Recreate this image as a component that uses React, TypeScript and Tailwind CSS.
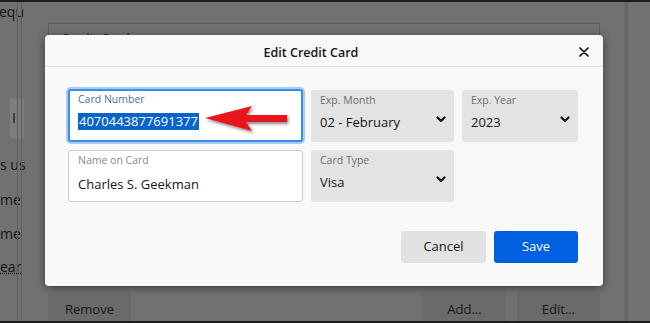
import * as React from 'react';

const font = { fontFamily: '"Open Sans", "Noto Sans", sans-serif' };

const Chevron = () => (
  <svg width="10" height="7" viewBox="0 0 10 7" className="shrink-0">
    <path d="M1.5 1.5 L5 5 L8.5 1.5" fill="none" stroke="#111" strokeWidth="2.2" strokeLinecap="round" strokeLinejoin="round" />
  </svg>
);

// the red pointer drawn over the card number
const RedArrow = () => (
  <svg width="90" height="32" viewBox="0 0 90 32" className="absolute left-[133px] top-[12px]">
    <defs>
      <filter id="sh" x="-10%" y="-20%" width="130%" height="160%">
        <feDropShadow dx="1.5" dy="2" stdDeviation="1.4" floodColor="#000" floodOpacity="0.45" />
      </filter>
    </defs>
    <polygon
      points="2,15 49,3 43,12 84,12 84,19 43,19 49,28"
      fill="#e8141c"
      filter="url(#sh)"
    />
  </svg>
);

interface SelectProps {
  label: string;
  value: string;
}

const SelectField = ({ label, value }: SelectProps) => (
  <div className="h-[52px] rounded-[3px] bg-[#e3e3e3] pl-[9px] pr-[8px] pt-[3px] flex flex-col">
    <span className="text-[10.5px] leading-[15px] text-[#6d6d6d]">{label}</span>
    <div className="flex items-center justify-between mt-[4px]">
      <span className="text-[13px] leading-[20px] text-[#151515]">{value}</span>
      <div className="-mt-[6px]"><Chevron /></div>
    </div>
  </div>
);

const App = () => {
  return (
    <div className="w-[650px] h-[323px] relative overflow-hidden bg-[#717171] border-y-2 border-[#1c1c1c]" style={font}>
      {/* page behind the dialog */}
      <div className="flex h-full">
        <div className="w-[17px] flex flex-col items-start text-[14px] leading-[20px] text-[#111]">
          <span className="whitespace-nowrap -ml-[1px]">equ</span>
          <div className="mt-[76px] h-[40px] w-[14px] bg-[#7d7d7d] ml-[10px] flex items-center text-[14px] pl-[2px]">I</div>
          <span className="whitespace-nowrap mt-[17px]">s us</span>
          <span className="whitespace-nowrap mt-[15px]">me</span>
          <span className="whitespace-nowrap mt-[14px]">me</span>
          <span className="whitespace-nowrap mt-[13px] underline decoration-dotted">ear</span>
        </div>
        <div className="w-[5px] border-x border-[#5f5f5f]" />
        <div className="flex-1 pl-[26px] pr-[25px] pt-[21px] flex flex-col">
          <div className="h-[30px] border border-[#5c5c5c] border-b-0 pl-[12px] pt-[5px] text-[13px] text-[#1e1e1e]">Credit Card</div>
          <div className="flex-1" />
          <div className="flex gap-[11px] h-[28px] text-[13px] text-[#161616]">
            <div className="w-[83px] bg-[#6a6a6a] flex items-center justify-center pt-[6px]">Remove</div>
            <div className="flex-1" />
            <div className="w-[83px] bg-[#6a6a6a] flex items-center justify-center pt-[6px]">Add...</div>
            <div className="w-[83px] bg-[#6a6a6a] flex items-center justify-center pt-[6px]">Edit...</div>
          </div>
        </div>
        <div className="w-[25px] border-l-[3px] border-[#646464]" />
      </div>

      {/* modal dialog */}
      <div className="absolute left-[45px] top-[33px] w-[558px] h-[251px] bg-[#f9f9f9] rounded-[4px] shadow-[0_2px_8px_rgba(0,0,0,0.45)] flex flex-col">
        <div className="h-[32px] shrink-0 border-b border-[#e4e4e4] relative flex items-center justify-center pt-[5px]">
          <span className="text-[12.5px] font-semibold text-[#151515] mr-[26px]">Edit Credit Card</span>
          <span className="absolute right-[14px] top-[12px]">
            <svg width="10" height="10" viewBox="0 0 10 10">
              <path d="M1 1 L9 9 M9 1 L1 9" stroke="#111" strokeWidth="1.7" strokeLinecap="round" />
            </svg>
          </span>
        </div>

        <div className="pl-[23px] pr-[25px] pt-[23px] flex flex-col flex-1">
          <div className="grid grid-cols-[235px_143px_116px] gap-x-[8px] gap-y-[8px]">
            <div className="relative h-[53px] -mt-[1px] bg-white border-2 border-[#3b8ee8] rounded-[3px] shadow-[0_0_0_2px_#a6cdf4] pl-[8px] pt-[1px] flex flex-col">
              <span className="text-[10.5px] leading-[15px] text-[#4d6f9a]">Card Number</span>
              <span className="mt-[6px] self-start text-[13px] leading-[17px] text-white bg-[#0b63ce] px-[1px]">4070443877691377</span>
              <RedArrow />
            </div>
            <SelectField label="Exp. Month" value="02 - February" />
            <SelectField label="Exp. Year" value="2023" />
            <div className="h-[52px] bg-white border border-[#cfcfcf] rounded-[3px] pl-[9px] pt-[2px] flex flex-col">
              <span className="text-[10.5px] leading-[15px] text-[#8a8a8a]">Name on Card</span>
              <span className="mt-[6px] text-[13px] leading-[20px] text-[#151515]">Charles S. Geekman</span>
            </div>
            <SelectField label="Card Type" value="Visa" />
          </div>

          <div className="flex justify-end gap-[8px] mt-[29px]">
            <button className="w-[85px] h-[32px] rounded-[3px] bg-[#e2e2e2] text-[13px] text-[#151515]">Cancel</button>
            <button className="w-[84px] h-[32px] rounded-[3px] bg-[#0061e0] text-[13px] text-white">Save</button>
          </div>
        </div>
      </div>
    </div>
  );
};

export default App;
